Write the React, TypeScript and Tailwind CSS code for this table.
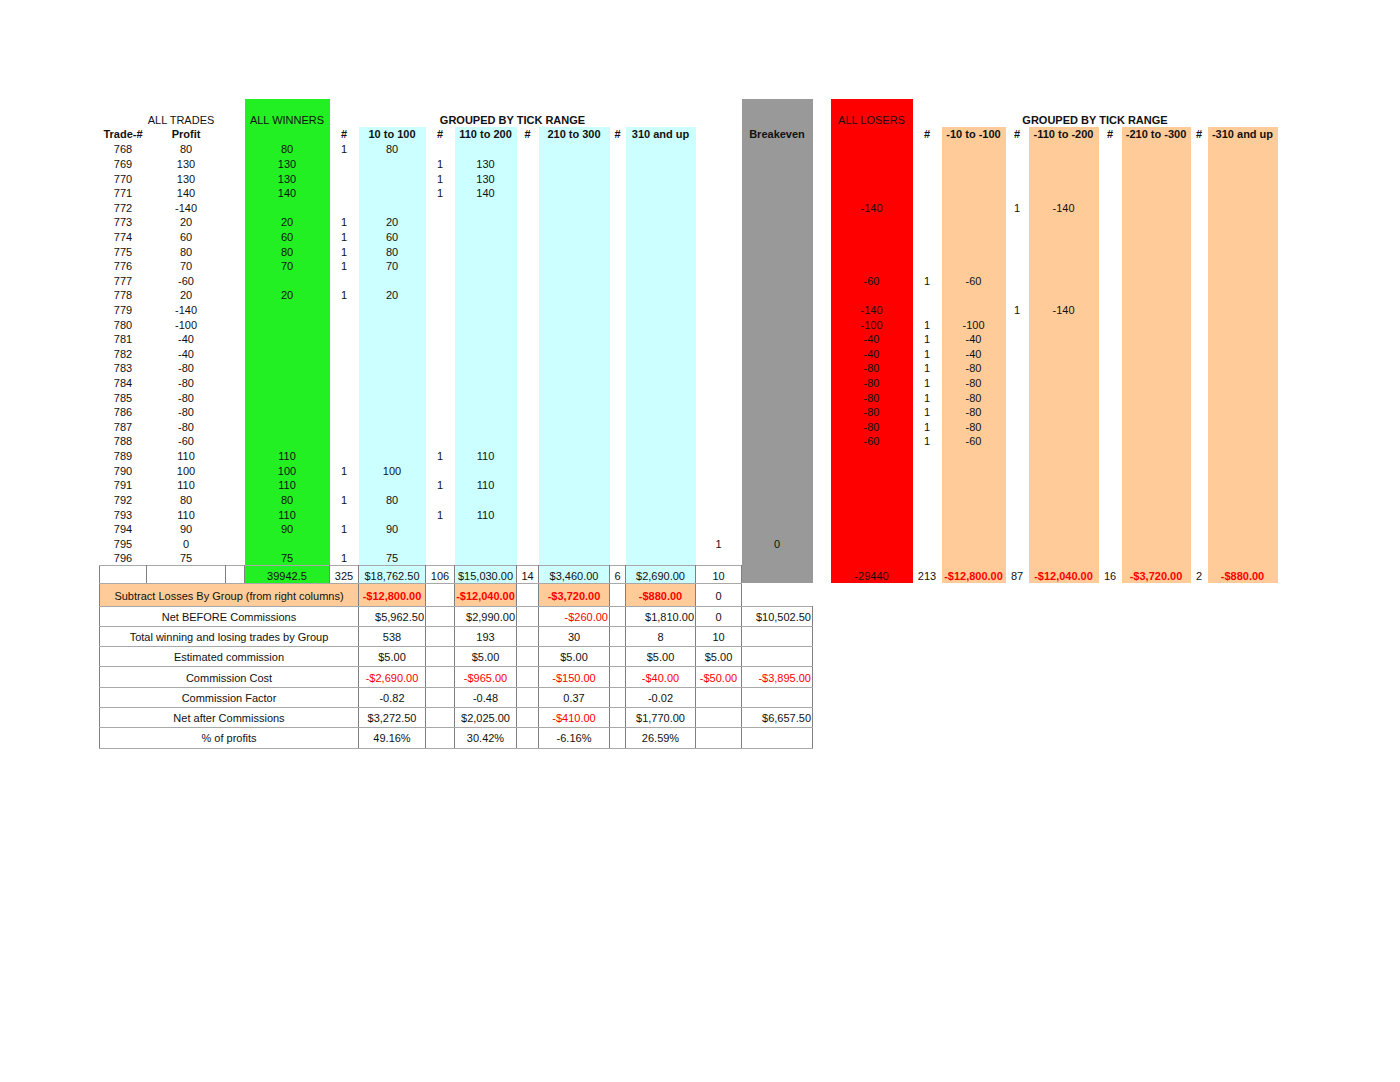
import React from "react"

// trade log: trade number + profit in ticks
const trades: [number, number][] = [
  [768, 80], [769, 130], [770, 130], [771, 140], [772, -140], [773, 20], [774, 60],
  [775, 80], [776, 70], [777, -60], [778, 20], [779, -140], [780, -100], [781, -40],
  [782, -40], [783, -80], [784, -80], [785, -80], [786, -80], [787, -80], [788, -60],
  [789, 110], [790, 100], [791, 110], [792, 80], [793, 110], [794, 90], [795, 0], [796, 75],
]

function groupOf(v: number) {
  const a = Math.abs(v)
  if (a <= 100) return 0
  if (a <= 200) return 1
  if (a <= 300) return 2
  return 3
}

const green = "bg-[#22f022]"
const cyan = "bg-[#ccffff]"
const gray = "bg-[#999999]"
const red = "bg-[#ff0000]"
const peach = "bg-[#ffcc99]"
const bd = "border border-x-[#808080] border-y-[#a8a8a8]"

const winHeads = ["10 to 100", "110 to 200", "210 to 300", "310 and up"]
const loseHeads = ["-10 to -100", "-110 to -200", "-210 to -300", "-310 and up"]

const winTotals = [
  ["325", "$18,762.50"],
  ["106", "$15,030.00"],
  ["14", "$3,460.00"],
  ["6", "$2,690.00"],
]
const loseTotals = [
  ["213", "-$12,800.00"],
  ["87", "-$12,040.00"],
  ["16", "-$3,720.00"],
  ["2", "-$880.00"],
]

type SummaryRow = { label: string; cells: string[]; right?: boolean }

// cells: F G H I J K L M N
const summary: SummaryRow[] = [
  { label: "Net BEFORE Commissions", cells: ["$5,962.50", "", "$2,990.00", "", "-$260.00", "", "$1,810.00", "0", "$10,502.50"], right: true },
  { label: "Total winning and losing trades by Group", cells: ["538", "", "193", "", "30", "", "8", "10", ""] },
  { label: "Estimated commission", cells: ["$5.00", "", "$5.00", "", "$5.00", "", "$5.00", "$5.00", ""] },
  { label: "Commission Cost", cells: ["-$2,690.00", "", "-$965.00", "", "-$150.00", "", "-$40.00", "-$50.00", "-$3,895.00"] },
  { label: "Commission Factor", cells: ["-0.82", "", "-0.48", "", "0.37", "", "-0.02", "", ""] },
  { label: "Net after Commissions", cells: ["$3,272.50", "", "$2,025.00", "", "-$410.00", "", "$1,770.00", "", "$6,657.50"] },
  { label: "% of profits", cells: ["49.16%", "", "30.42%", "", "-6.16%", "", "26.59%", "", ""] },
]

function SummaryLine({ row }: { row: SummaryRow }) {
  return (
    <tr className="h-[20.3px] [&>td]:pt-[2px]">
      <td colSpan={5} className={bd}>{row.label}</td>
      {row.cells.map((c, i) => {
        const isLast = i === 8
        const alignRight = isLast || (row.right && i % 2 === 0 && i < 7)
        return (
          <td
            key={i}
            className={`${bd} ${alignRight ? "text-right pr-[1px]" : "text-center"} ${c.startsWith("-$") ? "text-[#ff0000]" : ""}`}
          >
            {c}
          </td>
        )
      })}
    </tr>
  )
}

export default function App() {
  return (
    <div className="min-h-screen bg-white pl-[99px] pt-[99px] font-['Liberation_Sans',Arial,sans-serif] text-[11px] leading-none text-[#111]">
      <table className="w-[1178px] table-fixed border-collapse text-center">
        <colgroup>
          <col className="w-[47px]" />
          <col className="w-[79px]" />
          <col className="w-[19px]" />
          <col className="w-[85px]" />
          <col className="w-[29px]" />
          <col className="w-[67px]" />
          <col className="w-[29px]" />
          <col className="w-[62px]" />
          <col className="w-[22px]" />
          <col className="w-[71px]" />
          <col className="w-[16px]" />
          <col className="w-[70px]" />
          <col className="w-[46px]" />
          <col className="w-[71px]" />
          <col className="w-[18px]" />
          <col className="w-[82px]" />
          <col className="w-[29px]" />
          <col className="w-[64px]" />
          <col className="w-[23px]" />
          <col className="w-[70px]" />
          <col className="w-[23px]" />
          <col className="w-[69px]" />
          <col className="w-[17px]" />
          <col className="w-[70px]" />
        </colgroup>
        <tbody>
          <tr className="h-[13px]">
            <td colSpan={3} />
            <td className={green} />
            <td colSpan={9} />
            <td className={gray} />
            <td />
            <td className={red} />
            <td colSpan={8} />
          </tr>
          <tr className="h-[15px] [&>td]:pt-[2px]">
            <td />
            <td className="pr-[10px]">ALL TRADES</td>
            <td />
            <td className={green}>ALL WINNERS</td>
            <td colSpan={8} className="font-bold">GROUPED BY TICK RANGE</td>
            <td />
            <td className={gray} />
            <td />
            <td className={red}>ALL LOSERS</td>
            <td colSpan={8} className="font-bold">GROUPED BY TICK RANGE</td>
          </tr>
          <tr className="h-[15px] font-bold">
            <td>Trade-#</td>
            <td>Profit</td>
            <td />
            <td className={green} />
            {winHeads.map((h) => (
              <React.Fragment key={h}>
                <td>#</td>
                <td className={cyan}>{h}</td>
              </React.Fragment>
            ))}
            <td />
            <td className={gray}>Breakeven</td>
            <td />
            <td className={red} />
            {loseHeads.map((h) => (
              <React.Fragment key={h}>
                <td>#</td>
                <td className={peach}>{h}</td>
              </React.Fragment>
            ))}
          </tr>
          {trades.map(([t, p]) => {
            const g = groupOf(p)
            return (
              <tr key={t} className="h-[14.62px] [&>td]:pt-[1px]">
                <td>{t}</td>
                <td>{p}</td>
                <td />
                <td className={green}>{p > 0 ? p : ""}</td>
                {[0, 1, 2, 3].map((i) => (
                  <React.Fragment key={i}>
                    <td>{p > 0 && g === i ? 1 : ""}</td>
                    <td className={cyan}>{p > 0 && g === i ? p : ""}</td>
                  </React.Fragment>
                ))}
                <td>{p === 0 ? 1 : ""}</td>
                <td className={gray}>{p === 0 ? 0 : ""}</td>
                <td />
                <td className={red}>{p < 0 ? p : ""}</td>
                {[0, 1, 2, 3].map((i) => (
                  <React.Fragment key={i}>
                    <td>{p < 0 && g === i ? 1 : ""}</td>
                    <td className={peach}>{p < 0 && g === i ? p : ""}</td>
                  </React.Fragment>
                ))}
              </tr>
            )
          })}
          <tr className="h-[17.8px] [&>td]:pt-[4px]">
            <td className={bd} />
            <td className={bd} />
            <td className={bd} />
            <td className={`${bd} ${green}`}>39942.5</td>
            {winTotals.map(([n, v]) => (
              <React.Fragment key={v}>
                <td className={bd}>{n}</td>
                <td className={`${bd} ${cyan}`}>{v}</td>
              </React.Fragment>
            ))}
            <td className={bd}>10</td>
            <td className={gray} />
            <td />
            <td className={red}>-29440</td>
            {loseTotals.map(([n, v]) => (
              <React.Fragment key={v}>
                <td>{n}</td>
                <td className={`${peach} font-bold text-[#ff0000]`}>{v}</td>
              </React.Fragment>
            ))}
          </tr>
          <tr className="h-[22.6px] [&>td]:pt-[3px]">
            <td colSpan={5} className={`${bd} ${peach}`}>Subtract Losses By Group (from right columns)</td>
            {loseTotals.map(([, v], i) => (
              <React.Fragment key={v}>
                <td className={`${bd} ${peach} font-bold text-[#ff0000]`}>{v}</td>
                {i < 3 && <td className={bd} />}
              </React.Fragment>
            ))}
            <td className={bd}>0</td>
            <td colSpan={11} />
          </tr>
          {summary.map((row) => (
            <SummaryLine key={row.label} row={row} />
          ))}
        </tbody>
      </table>
    </div>
  )
}
